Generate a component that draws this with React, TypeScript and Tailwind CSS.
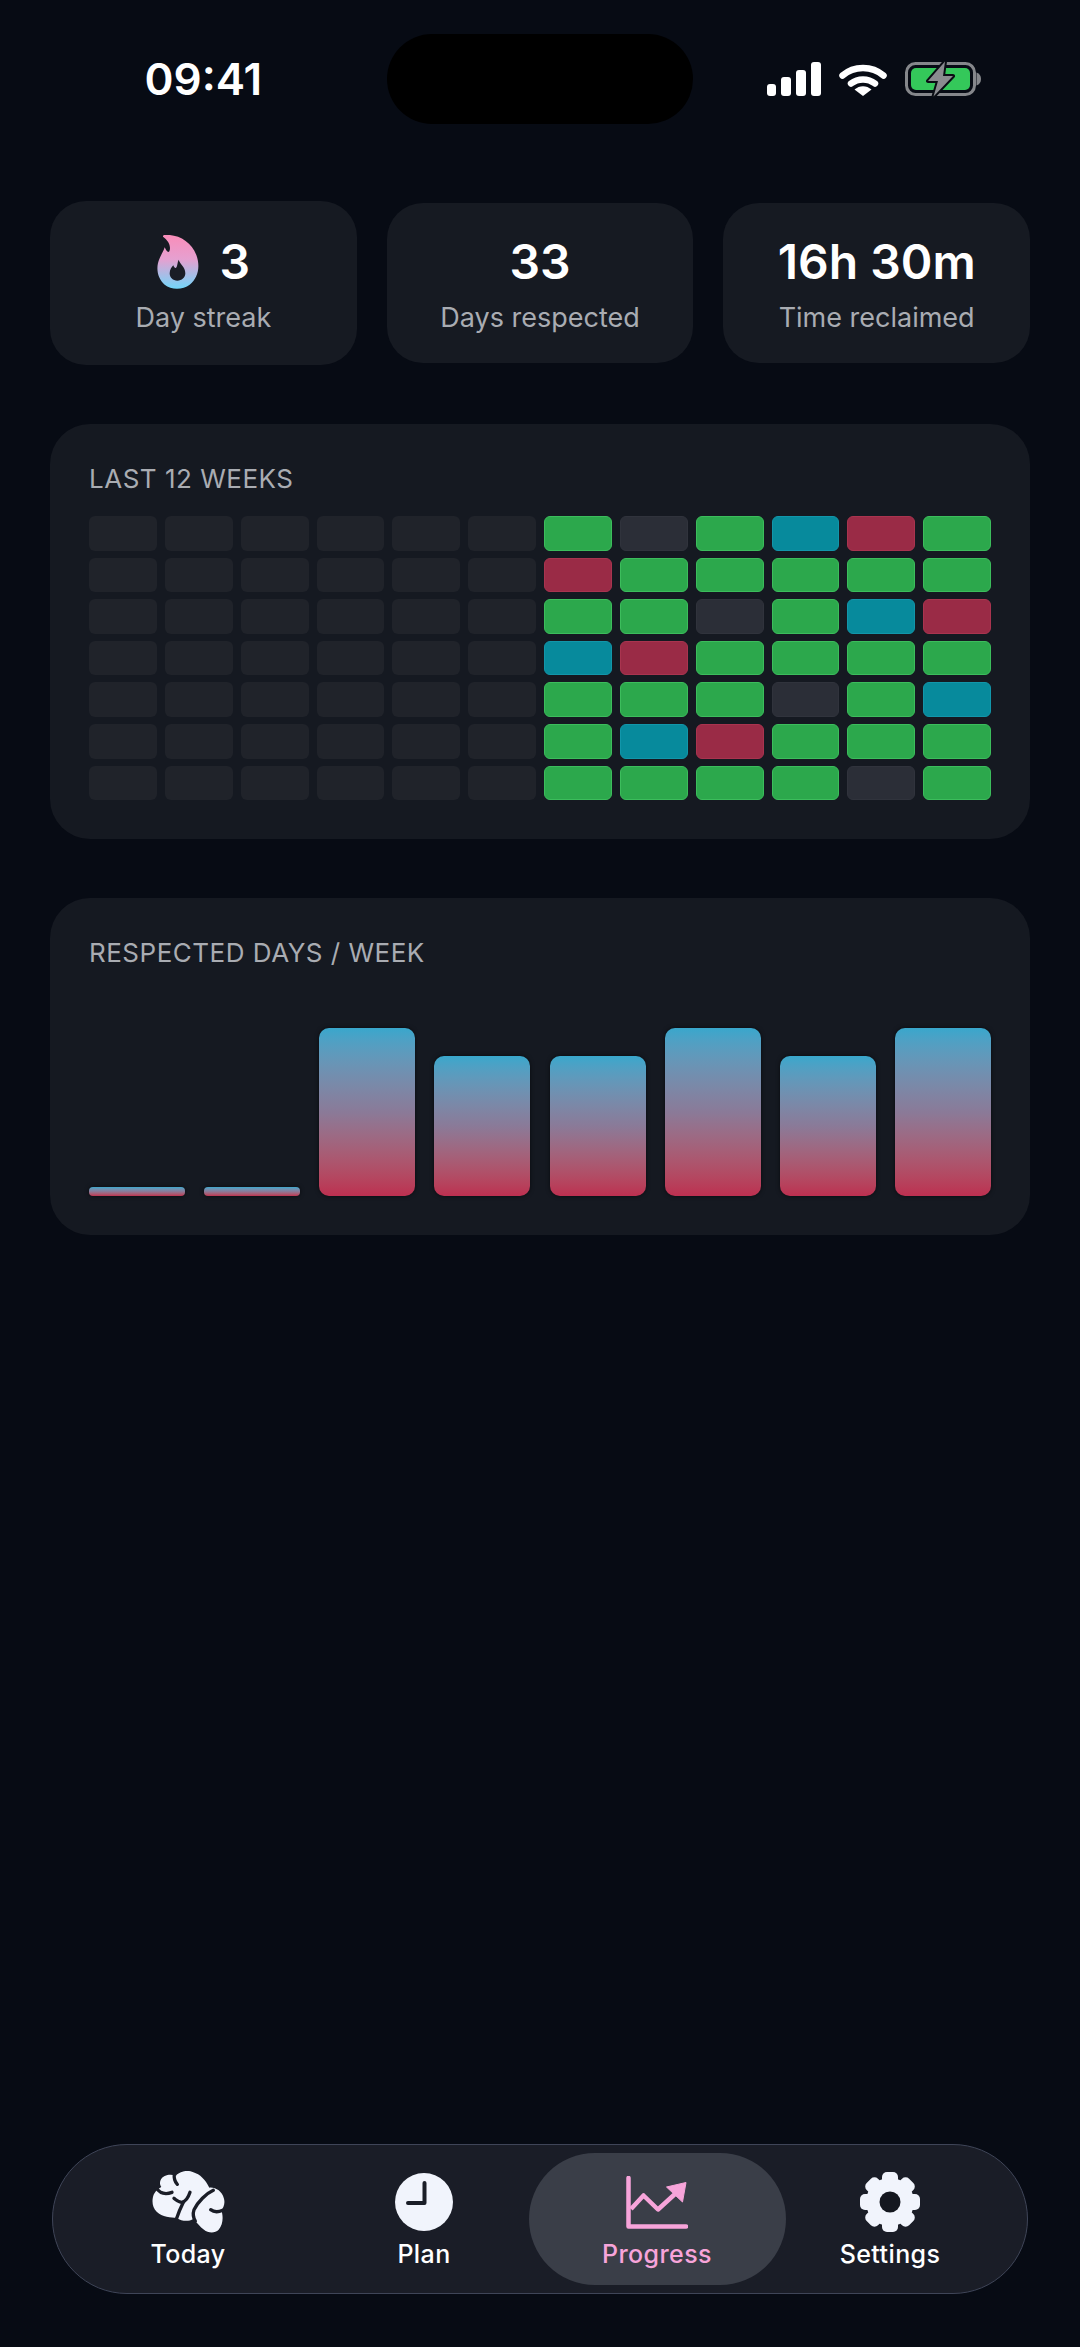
const grid = [
  "gmgtrg",
  "rggggg",
  "ggmgtr",
  "trgggg",
  "gggmgt",
  "gtrggg",
  "ggggmg",
];

const cellClass: Record<string, string> = {
  g: "bg-[#2ca84c] border-[#3cbd5c]",
  m: "bg-[#2b2e37] border-[#30333c]",
  t: "bg-[#078a9c] border-[#1296aa]",
  r: "bg-[#9a2b46] border-[#a9344f]",
};

const bars = [
  "h-[9px] rounded-[4px]",
  "h-[9px] rounded-[4px]",
  "h-[168px] rounded-[10px]",
  "h-[140px] rounded-[10px]",
  "h-[140px] rounded-[10px]",
  "h-[168px] rounded-[10px]",
  "h-[140px] rounded-[10px]",
  "h-[168px] rounded-[10px]",
];

function Flame() {
  return (
    <svg width="42" height="54" viewBox="88 75 124 162">
      <defs>
        <linearGradient id="flame" x1="0" y1="0" x2="0" y2="1">
          <stop offset="0" stopColor="#f98db9" />
          <stop offset="0.45" stopColor="#e6a0d0" />
          <stop offset="1" stopColor="#72d6fa" />
        </linearGradient>
      </defs>
      <path
        d="M112 75C150 72 190 95 205 135C218 170 210 205 185 224C165 240 130 241 110 224C88 206 82 172 95 145C100 133 106 125 110 112C116 125 120 128 124 124C130 110 122 92 105 80C104 77 107 75 112 75Z"
        fill="url(#flame)"
      />
      <path
        d="M152 149C155 162 172 170 172 190C172 203 161 212 148 212C135 212 125 203 125 190C125 178 132 170 136 166C138 172 141 175 144 174C149 167 148 157 152 149Z"
        fill="#1a1d26"
      />
    </svg>
  );
}

function Signal() {
  return (
    <div className="flex items-end gap-[5.5px] h-[34px]">
      <div className="w-[9px] h-[12px] rounded-[3px] bg-white" />
      <div className="w-[9.5px] h-[19px] rounded-[3px] bg-white" />
      <div className="w-[9.5px] h-[26px] rounded-[3px] bg-white" />
      <div className="w-[9.5px] h-[34px] rounded-[3px] bg-white" />
    </div>
  );
}

function Wifi() {
  return (
    <svg width="48" height="33" viewBox="0 0 48 33">
      <path d="M3.5 12.5C15 2.5 33 2.5 44.5 12.5" fill="none" stroke="#fff" strokeWidth="6.5" strokeLinecap="round" />
      <path d="M12 20.5C19 15 29 15 36 20.5" fill="none" stroke="#fff" strokeWidth="6.5" strokeLinecap="round" />
      <path d="M15.5 26.5C20.5 22 27.5 22 32.5 26.5L24 33Z" fill="#fff" />
    </svg>
  );
}

function Battery() {
  return (
    <svg width="76" height="36" viewBox="0 0 76 36">
      <rect x="1.5" y="2.5" width="68" height="31" rx="9" fill="none" stroke="#85878b" strokeWidth="3" />
      <rect x="6" y="7" width="59" height="22" rx="5" fill="#34c85a" />
      <path d="M71.5 11.5C74.5 12.5 76 15 76 18C76 21 74.5 23.5 71.5 24.5Z" fill="#85878b" />
      <path
        d="M40 0.5L23 20H33L28.5 35.5L48 15H38Z"
        fill="#8a8b8f"
        stroke="#0a0d14"
        strokeWidth="4"
        strokeLinejoin="round"
        paintOrder="stroke"
      />
    </svg>
  );
}

function Brain() {
  return (
    <svg width="74" height="62" viewBox="335 122 222 186">
      <path
        d="M340 205C342 188 352 178 366 170C358 160 362 144 376 137C388 131 400 133 410 136C420 124 445 118 462 126C482 132 498 148 510 172C528 170 548 182 554 205C558 220 552 232 546 240C552 258 552 282 538 298C526 310 506 308 494 298C482 290 474 278 462 266C448 274 428 274 412 262C396 262 368 260 352 244C342 234 338 220 340 205Z"
        fill="#f1f4fc"
      />
      <g fill="none" stroke="#1a1d27" strokeWidth="10" strokeLinecap="round" strokeLinejoin="round">
        <path d="M350 172C362 190 378 194 398 186" />
        <path d="M405 130C403 146 408 156 414 162" />
        <path d="M452 186C446 204 438 214 428 216C418 216 412 210 404 204" />
        <path d="M432 216C424 232 418 246 412 264" />
        <path d="M522 180C500 190 476 214 464 238C460 250 462 262 468 272" />
        <path d="M550 240C536 246 524 246 514 238" />
      </g>
    </svg>
  );
}

function Clock() {
  return (
    <svg width="58" height="58" viewBox="0 0 58 58">
      <circle cx="29" cy="29" r="29" fill="#f1f4fc" />
      <path d="M29.5 10V30H13" fill="none" stroke="#1a1d27" strokeWidth="4" strokeLinecap="round" strokeLinejoin="round" />
    </svg>
  );
}

function Chart() {
  return (
    <svg width="62" height="53" viewBox="0 0 62 53">
      <path d="M2.5 2V50.5H60" fill="none" stroke="#f7a4da" strokeWidth="4.5" strokeLinecap="round" strokeLinejoin="round" />
      <path d="M5 33L17.5 19.5L32 33.5L49 18" fill="none" stroke="#f7a4da" strokeWidth="4.5" strokeLinejoin="round" />
      <path d="M60 6.5L40.5 11L56.5 26Z" fill="#f7a4da" stroke="#f7a4da" strokeWidth="1" strokeLinejoin="round" />
    </svg>
  );
}

function Gear() {
  return (
    <svg width="60" height="60" viewBox="0 0 60 60">
      <g fill="#f1f4fc">
        <circle cx="30" cy="30" r="24" />
        {[0, 45, 90, 135].map((deg) => (
          <rect key={deg} x="22" y="0" width="16" height="60" rx="5" transform={`rotate(${deg} 30 30)`} />
        ))}
      </g>
      <circle cx="30" cy="30" r="10.5" fill="#14171f" />
    </svg>
  );
}

function Stat({ tall, value, label, icon }: { tall?: boolean; value: string; label: string; icon?: boolean }) {
  return (
    <div
      className={`flex flex-col items-center rounded-[36px] bg-[#161a22] ${
        tall ? "h-[164px] pt-[34px]" : "h-[160px] pt-[32px]"
      }`}
    >
      <div className="flex items-center gap-[21px] h-[54px]">
        {icon && <Flame />}
        <span className="text-[48px] leading-[54px] font-semibold text-white">{value}</span>
      </div>
      <span className="mt-[10px] text-[27px] leading-[38px] text-[#a9acb2]">{label}</span>
    </div>
  );
}

function Tab({ label, active, children }: { label: string; active?: boolean; children: React.ReactNode }) {
  return (
    <div
      className={`flex flex-col items-center ${
        active ? "w-[257px] -mx-[13.5px] h-[132px] rounded-[66px] bg-[#3a3e48]" : "w-[236px] h-[132px]"
      }`}
    >
      <div className="flex items-center justify-center h-[62px] mt-[18px]">{children}</div>
      <span
        className={`mt-[6px] text-[25px] leading-[30px] font-medium tracking-[0.4px] ${
          active ? "text-[#f7a4da]" : "text-white"
        }`}
      >
        {label}
      </span>
    </div>
  );
}

export default function App() {
  return (
    <div
      className="flex flex-col w-[1080px] h-[2347px] px-[50px] bg-[#070b14]"
      style={{ fontFamily: "Inter, sans-serif" }}
    >
      <div className="grid grid-cols-3 gap-[30px] items-center pt-[34px]">
        <div className="text-center text-[44px] font-semibold text-white">09:41</div>
        <div className="h-[90px] rounded-[45px] bg-black" />
        <div className="flex items-center justify-center gap-[18px] pr-[6px]">
          <Signal />
          <Wifi />
          <Battery />
        </div>
      </div>

      <div className="grid grid-cols-3 gap-[30px] items-center mt-[77px]">
        <Stat tall icon value="3" label="Day streak" />
        <Stat value="33" label="Days respected" />
        <Stat value="16h 30m" label="Time reclaimed" />
      </div>

      <div className="mt-[59px] rounded-[40px] bg-[#151921] px-[39px] pt-[40px] pb-[39px]">
        <div className="text-[26px] leading-[30px] tracking-[0.5px] text-[#a9acb2] uppercase">Last 12 weeks</div>
        <div className="mt-[22px] flex flex-col gap-[7px]">
          {grid.map((row, r) => (
            <div key={r} className="grid grid-cols-12 gap-[8px]">
              {Array.from({ length: 6 }).map((_, c) => (
                <div key={c} className="h-[34.6px] rounded-[6px] bg-[#20232a]" />
              ))}
              {row.split("").map((k, c) => (
                <div key={c} className={`h-[34.6px] rounded-[6px] border ${cellClass[k]}`} />
              ))}
            </div>
          ))}
        </div>
      </div>

      <div className="mt-[59px] rounded-[40px] bg-[#151921] px-[39px] pt-[40px] pb-[39px]">
        <div className="text-[26px] leading-[30px] tracking-[0.5px] text-[#a9acb2] uppercase">
          Respected days / week
        </div>
        <div className="mt-[60px] flex items-end justify-between h-[168px]">
          {bars.map((h, i) => (
            <div
              key={i}
              className={`w-[96px] ${h} bg-gradient-to-b from-[#38a7cc] via-[#8a7a98] to-[#bd2f50] shadow-[0_0_4px_rgba(0,0,0,0.6)]`}
            />
          ))}
        </div>
      </div>

      <div className="mt-auto mb-[53px] flex items-center h-[150px] mx-[2px] pl-[17px] rounded-[75px] border border-[#3f4558] bg-[#1a1d27]">
        <Tab label="Today">
          <Brain />
        </Tab>
        <Tab label="Plan">
          <Clock />
        </Tab>
        <Tab label="Progress" active>
          <Chart />
        </Tab>
        <Tab label="Settings">
          <Gear />
        </Tab>
      </div>
    </div>
  );
}
